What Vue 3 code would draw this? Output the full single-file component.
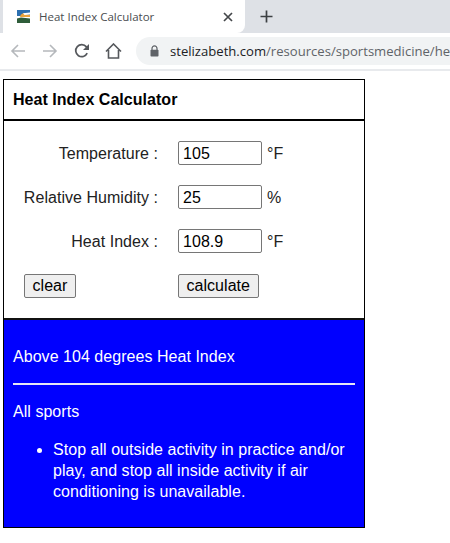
<script setup>
const rows = [
  { label: 'Temperature :', value: '105', unit: '°F' },
  { label: 'Relative Humidity :', value: '25', unit: '%' },
  { label: 'Heat Index :', value: '108.9', unit: '°F' },
]
</script>

<template>
  <div class="page">
    <div class="tabstrip">
      <div class="tab">
        <svg class="favicon" width="13" height="13" viewBox="0 0 13 13">
          <rect width="13" height="13" fill="#fff" />
          <rect x="0" y="0" width="13" height="6" fill="#2c6fb0" />
          <path d="M3 7a4 4 0 0 1 7-2.5L13 5V7z" fill="#e9a33c" />
          <path d="M6 3.2 13 2.4V4.6L7.5 5z" fill="#fff" />
          <path d="M0 8.5 4 7.5 13 8.6V13H0z" fill="#2f5d3a" />
        </svg>
        <span class="tab-title">Heat Index Calculator</span>
        <svg class="close" width="10" height="10" viewBox="0 0 10 10">
          <path d="M1 1 9 9M9 1 1 9" stroke="#44474a" stroke-width="1.7" fill="none" />
        </svg>
      </div>
      <svg class="plus" width="13" height="13" viewBox="0 0 13 13">
        <path d="M6.5 0.5V12.5M0.5 6.5H12.5" stroke="#3c4043" stroke-width="1.7" fill="none" />
      </svg>
    </div>

    <div class="toolbar">
      <svg class="nav" width="16" height="16" viewBox="0 0 16 16">
        <path d="M15 8H2M8 2 2 8l6 6" stroke="#b5b8bc" stroke-width="1.6" fill="none" />
      </svg>
      <svg class="nav" width="16" height="16" viewBox="0 0 16 16">
        <path d="M1 8H14M8 2l6 6-6 6" stroke="#b5b8bc" stroke-width="1.6" fill="none" />
      </svg>
      <svg class="nav" width="16" height="16" viewBox="0 0 16 16">
        <path d="M13.2 10.2A6 6 0 1 1 12.4 3.9L14 5.5" stroke="#55585c" stroke-width="1.7" fill="none" />
        <path d="M15 1V7H9z" fill="#55585c" />
      </svg>
      <svg class="nav" width="17" height="16" viewBox="0 0 17 16">
        <path d="M1 8.5 8.5 1 16 8.5M3.5 7V15H13.5V7" stroke="#55585c" stroke-width="1.6" fill="none" />
      </svg>
      <div class="omnibox">
        <svg class="lock" width="9" height="12" viewBox="0 0 9 12">
          <path d="M2 5V3.4a2.5 2.5 0 0 1 5 0V5" stroke="#5f6368" stroke-width="1.2" fill="none" />
          <rect x="0.5" y="4.8" width="8" height="6.7" rx="0.8" fill="#5f6368" />
        </svg>
        <span class="url"><span class="host">stelizabeth.com</span>/resources/sportsmedicine/he</span>
      </div>
    </div>
    <div class="chrome-line"></div>

    <div class="panel">
      <div class="panel-head">Heat Index Calculator</div>

      <div class="form">
        <template v-for="row in rows" :key="row.label">
          <span class="label">{{ row.label }}</span>
          <div class="field">
            <div class="input">{{ row.value }}</div>
            <span class="unit">{{ row.unit }}</span>
          </div>
        </template>
        <div class="btn-left"><button class="btn" type="button">clear</button></div>
        <div class="btn-right"><button class="btn" type="button">calculate</button></div>
      </div>

      <div class="result">
        <p class="result-title">Above 104 degrees Heat Index</p>
        <div class="rule"></div>
        <p class="sport">All sports</p>
        <ul class="advice">
          <li>Stop all outside activity in practice and/or play, and stop all inside activity if air conditioning is unavailable.</li>
        </ul>
      </div>
    </div>
  </div>
</template>

<style>
html, body { margin: 0; background: #fff; overflow: hidden; }
</style>

<style scoped>
.page {
  width: 450px;
  height: 543px;
  overflow: hidden;
  background: #fff;
  font-family: "Liberation Sans", Arial, sans-serif;
}
.tabstrip {
  height: 33px;
  background: #dee1e6;
  display: flex;
  align-items: center;
}
.tab {
  width: 242px;
  height: 33px;
  margin-left: 3px;
  margin-right: 16px;
  box-sizing: border-box;
  background: #fff;
  border-radius: 0 0 8px 0;
  display: flex;
  align-items: center;
  padding: 0 8px 0 14px;
}
.favicon { flex: none; }
.tab-title {
  margin-left: 9px;
  font-family: "Open Sans", "Noto Sans", sans-serif;
  font-size: 11.5px;
  color: #4a4d50;
  white-space: nowrap;
  flex: 1;
}
.close { flex: none; margin-right: 4px; }
.plus { flex: none; margin-left: -1px; }
.toolbar {
  height: 35px;
  box-sizing: border-box;
  background: #fff;
  display: flex;
  align-items: center;
  padding-left: 10px;
  padding-top: 1px;
  overflow: hidden;
}
.nav { flex: none; margin-right: 16px; }
.nav:nth-child(3) { margin-right: 15px; }
.nav:nth-child(4) { margin-right: 14px; }
.omnibox {
  flex: none;
  width: 340px;
  height: 28px;
  border-radius: 14px 0 0 14px;
  background: #f1f3f4;
  display: flex;
  align-items: center;
  padding-left: 14px;
  box-sizing: border-box;
  white-space: nowrap;
  overflow: hidden;
}
.lock { flex: none; margin-right: 11px; }
.url {
  font-family: "Open Sans", "Noto Sans", sans-serif;
  font-size: 13.1px;
  color: #5f6368;
}
.host { color: #202124; }
.chrome-line {
  height: 2px;
  margin-top: 1px;
  background: #e8eaed;
  margin-bottom: 8px;
}
.panel {
  width: 362px;
  margin-left: 3px;
  box-sizing: border-box;
  border: 1px solid #000;
  color: #000;
  letter-spacing: 0.04px;
}
.panel-head {
  height: 39px;
  line-height: 39px;
  padding-left: 9px;
  font-size: 16px;
  font-weight: 700;
  border-bottom: 2px solid #000;
}
.form {
  display: grid;
  grid-template-columns: 154px 1fr;
  column-gap: 20px;
  row-gap: 20px;
  align-items: center;
  padding: 20px 0 20px;
  border-bottom: 2px solid #111;
  font-size: 16px;
}
.label { text-align: right; color: #222; padding-top: 2px; }
.field { display: flex; align-items: center; gap: 5px; }
.input {
  width: 84px;
  height: 24px;
  box-sizing: border-box;
  border: 1px solid #767676;
  border-radius: 2px;
  padding-left: 4px;
  line-height: 23px;
  font-size: 16px;
  color: #000;
  background: #fff;
}
.unit { color: #222; padding-top: 2px; }
.btn-left { padding-left: 20px; margin-top: 1px; }
.btn-right { margin-top: 1px; }
.btn {
  height: 24px;
  padding: 0 7.5px;
  font-family: inherit;
  font-size: 16px;
  letter-spacing: 0.04px;
  color: #000;
  background: #efefef;
  border: 1px solid #767676;
  border-radius: 2px;
  display: block;
}
.result {
  background: #0000ff;
  color: #fff;
  padding: 26px 9px 25px;
  font-size: 16px;
  line-height: 21px;
}
.result-title { margin: 0; }
.rule { height: 2px; background: #e6e6f5; margin: 16px 0 16px; }
.sport { margin: 0; }
.advice { margin: 17px 0 0; padding: 0 0 0 40px; }
</style>
